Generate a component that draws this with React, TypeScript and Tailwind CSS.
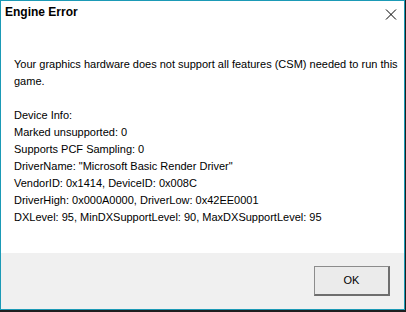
import React from "react";

export default function App() {
  const lines = [
    "Your graphics hardware does not support all features (CSM) needed to run this",
    "game.",
    "\u00a0",
    "Device Info:",
    "Marked unsupported: 0",
    "Supports PCF Sampling: 0",
    'DriverName: "Microsoft Basic Render Driver"',
    "VendorID: 0x1414, DeviceID: 0x008C",
    "DriverHigh: 0x000A0000, DriverLow: 0x42EE0001",
    "DXLevel: 95, MinDXSupportLevel: 90, MaxDXSupportLevel: 95",
  ];
  return (
    <div className="w-[406px] h-[312px] bg-[#1f1f1f] overflow-hidden" style={{ fontFamily: '"Liberation Sans", Arial, sans-serif' }}>
      <div className="w-[405px] h-[310px] border border-[#1b9ab6] bg-white flex flex-col">
        <div className="relative flex items-start pt-[3px] pl-[4px] h-[21px]">
          <span className="text-[12px] leading-[17px] font-bold text-black">Engine Error</span>
          <svg className="absolute left-[384px] top-[8px]" width="12" height="11" viewBox="0 0 12 11">
            <path d="M1 0.5 L11 10.5 M11 0.5 L1 10.5" stroke="#000" strokeWidth="1" />
          </svg>
        </div>
        <div className="flex-1 pl-[13px] pt-[34px] text-[11px] leading-[17px] text-black whitespace-nowrap">
          {lines.map((l, i) => (
            <div key={i}>{l}</div>
          ))}
        </div>
        <div className="h-[56px] bg-[#f0f0f0] flex justify-end items-start pt-[13px] pr-[14px]">
          <button className="w-[76px] h-[30px] bg-[#ebebeb] border-t border-l border-r-2 border-b-2 border-t-[#8c8c8c] border-l-[#8c8c8c] border-r-[#6e6e6e] border-b-[#6e6e6e] text-[11px] text-black flex items-center justify-center">
            OK
          </button>
        </div>
      </div>
    </div>
  );
}
